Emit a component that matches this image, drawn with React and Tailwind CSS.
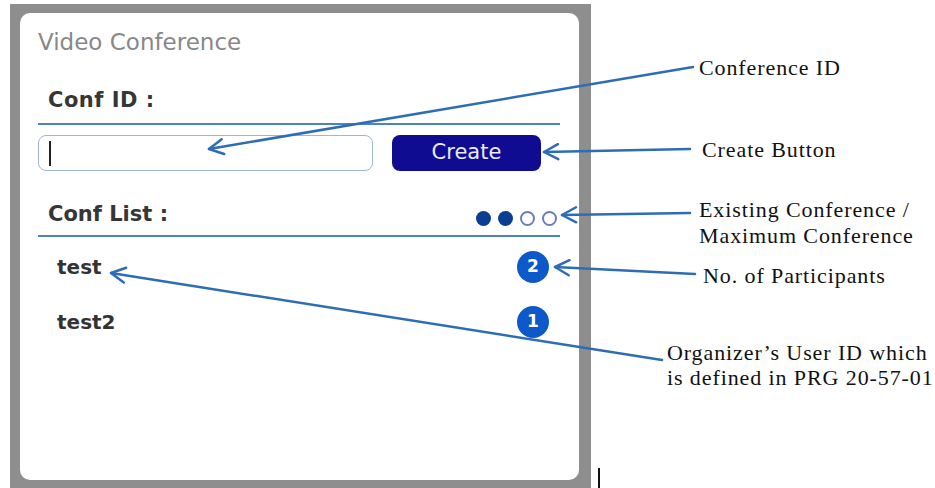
import React from "react";

function Arrow({ x1, y1, x2, y2 }) {
  const ang = Math.atan2(y1 - y2, x1 - x2);
  const len = 16;
  const spread = (28 * Math.PI) / 180;
  const a1x = x2 + len * Math.cos(ang + spread);
  const a1y = y2 + len * Math.sin(ang + spread);
  const a2x = x2 + len * Math.cos(ang - spread);
  const a2y = y2 + len * Math.sin(ang - spread);
  return (
    <g>
      <line x1={x1} y1={y1} x2={x2} y2={y2} />
      <polyline points={`${a1x},${a1y} ${x2},${y2} ${a2x},${a2y}`} fill="none" />
    </g>
  );
}

function Dot({ filled }) {
  return filled ? (
    <span className="block w-[15px] h-[15px] rounded-full bg-[#0b3d91]" />
  ) : (
    <span className="block w-[15px] h-[15px] rounded-full bg-white border-2 border-[#6d7db8]" />
  );
}

function Badge({ n }) {
  return (
    <span className="flex items-center justify-center w-[32px] h-[32px] rounded-full bg-[#0e59c9] text-white text-[17px] font-bold leading-none">
      {n}
    </span>
  );
}

export default function App() {
  const sans = { fontFamily: '"DejaVu Sans", Verdana, sans-serif' };
  const serif = { fontFamily: '"Liberation Serif", "Times New Roman", serif' };
  return (
    <div className="relative w-[935px] h-[488px] overflow-hidden bg-white flex">
      {/* Gray frame */}
      <div className="shrink-0 mt-[4px] ml-[10px] w-[581px] h-[500px] bg-[#8e8e8e] pt-[9px] pl-[10px] pr-[12px]">
        <div
          className="h-[467px] rounded-[10px] bg-white pl-[18px] pr-[19px] pt-[16px] flex flex-col"
          style={sans}
        >
          <div className="h-[26px] leading-[26px] text-[23px] text-[#888888]">Video Conference</div>
          <div className="mt-[32px] pl-[10px] h-[26px] leading-[26px] text-[21px] font-bold text-[#363636] tracking-[0.5px]">
            Conf ID :
          </div>
          <div className="mt-[10px] h-[2px] bg-[#4c82bf]" />
          <div className="mt-[10px] flex items-center gap-[19px]">
            <div className="w-[335px] h-[36px] rounded-[8px] border-[1.5px] border-[#a3b5d4] bg-white flex items-center pl-[10px]">
              <span className="block w-[2px] h-[25px] bg-[#222]" />
            </div>
            <div className="w-[149px] h-[36px] rounded-[8px] bg-[#100c92] flex items-center justify-center text-[21px] text-[#e8eaff]">
              Create
            </div>
          </div>
          <div className="mt-[30px] flex items-end justify-between pl-[10px] pr-[3px]">
            <div className="h-[26px] leading-[26px] text-[21px] font-bold text-[#363636]">Conf List :</div>
            <div className="flex gap-[7px] pb-[1px]">
              <Dot filled />
              <Dot filled />
              <Dot />
              <Dot />
            </div>
          </div>
          <div className="mt-[8px] h-[2px] bg-[#4c82bf]" />
          <div className="mt-[2px] flex flex-col pl-[19px] pr-[11px]">
            <div className="h-[55px] flex items-center justify-between">
              <span className="text-[20px] leading-[26px] font-bold text-[#333]">test</span>
              <Badge n="2" />
            </div>
            <div className="h-[55px] flex items-center justify-between">
              <span className="text-[20px] leading-[26px] font-bold text-[#333]">test2</span>
              <Badge n="1" />
            </div>
          </div>
        </div>
      </div>

      {/* Annotation labels */}
      <div className="flex flex-col flex-1 text-[22px] tracking-[0.9px] text-[#111]" style={serif}>
        <div className="mt-[55px] ml-[108px] leading-[26px] whitespace-nowrap">Conference ID</div>
        <div className="mt-[56px] ml-[111px] leading-[26px] whitespace-nowrap">Create Button</div>
        <div className="mt-[34px] ml-[108px] leading-[26px] whitespace-nowrap">
          Existing Conference /<br />
          Maximum Conference
        </div>
        <div className="mt-[14px] ml-[112px] leading-[26px] whitespace-nowrap">No. of Participants</div>
        <div className="mt-[51px] ml-[76px] leading-[25px] whitespace-nowrap">
          Organizer’s User ID which
          <br />
          is defined in PRG 20-57-01
        </div>
        <div className="mt-auto ml-[7px] w-[1.5px] h-[20px] bg-[#111]" />
      </div>

      {/* Arrows overlay */}
      <svg
        className="absolute inset-0 pointer-events-none"
        width="935"
        height="488"
        viewBox="0 0 935 488"
        stroke="#2e6db5"
        strokeWidth="2.5"
        strokeLinecap="round"
        strokeLinejoin="round"
      >
        <Arrow x1={693} y1={67} x2={209} y2={149} />
        <Arrow x1={690} y1={149} x2={544} y2={152} />
        <Arrow x1={690} y1={213} x2={562} y2={215} />
        <Arrow x1={695} y1={274} x2={555} y2={267} />
        <Arrow x1={662} y1={360} x2={111} y2={273} />
      </svg>
    </div>
  );
}
